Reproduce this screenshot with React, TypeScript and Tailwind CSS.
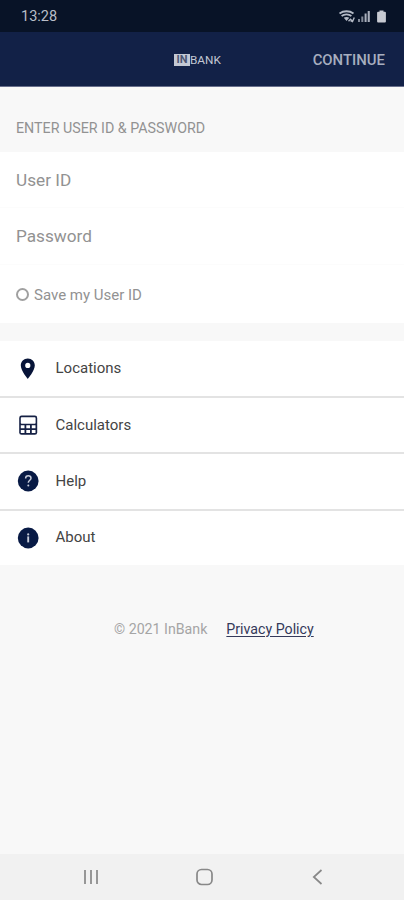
import type { ReactNode } from "react";

interface MenuItem {
  label: string;
  icon: ReactNode;
}

const MENU_ITEMS: MenuItem[] = [
  {
    label: "Locations",
    icon: (
      <svg className="w-6 h-6" viewBox="0 0 24 24" fill="#071438">
        <path
          fillRule="evenodd"
          d="M11.8 1.5C7.8 1.5 4.8 4.5 4.8 8.500c0 5.200 7 13.400 7 13.400s7-8.200 7-13.400c0-4-3-7-7-7zm0 4.300a2.600 2.600 0 100 5.200 2.600 2.600 0 000-5.200z"
        />
      </svg>
    ),
  },
  {
    label: "Calculators",
    icon: (
      <svg className="w-6 h-6" viewBox="0 0 24 24">
        <rect x="3.2" y="2.6" width="18" height="19.2" rx="2.4" fill="#152044" />
        <rect x="4.8" y="4.3" width="14.8" height="6.4" rx="0.8" fill="white" />
        <path
          fill="white"
          d="M4.8 12.3h3.7v2.9H4.8zM10.3 12.3H14v2.9h-3.7zM15.8 12.3h3.7v2.9h-3.7zM4.8 17h3.7v2.9H4.8zM10.3 17H14v2.9h-3.7zM15.8 17h3.7v2.9h-3.7z"
        />
      </svg>
    ),
  },
  {
    label: "Help",
    icon: (
      <svg className="w-6 h-6" viewBox="0 0 24 24">
        <circle cx="12.2" cy="12" r="10.4" fill="#081a45" />
        <path
          d="M9.6 9.5c0-1.7 1.1-2.7 2.7-2.7s2.7 1 2.7 2.4c0 2-2.7 2.1-2.7 4.5"
          fill="none"
          stroke="#c5cad8"
          strokeWidth="1.5"
        />
        <circle cx="12.3" cy="16.4" r="1" fill="#c5cad8" />
      </svg>
    ),
  },
  {
    label: "About",
    icon: (
      <svg className="w-6 h-6" viewBox="0 0 24 24">
        <circle cx="12.2" cy="12" r="10.4" fill="#081a45" />
        <circle cx="12.2" cy="8.4" r="1.1" fill="#c5cad8" />
        <path d="M12.2 10.4v6" stroke="#c5cad8" strokeWidth="1.9" />
      </svg>
    ),
  },
];

function StatusBar() {
  return (
    <div className="h-8 shrink-0 bg-[#081327] pl-[21px] pr-[18px] pt-px flex items-center justify-between">
      <span className="text-[14.5px] leading-[31px] text-[#b9bec8]">13:28</span>
      <div className="flex items-center">
        <svg className="w-[17px] h-[14px]" viewBox="0 0 17 14" fill="none" stroke="#b4bac6">
          <path d="M0.5 3.5c4-3 10-3 14 0" strokeWidth="1.8" />
          <path d="M2.6 6c2.7-2.3 7.1-2.3 9.8 0" strokeWidth="1.7" />
          <path d="M4.8 7.8c1.5-1.2 4-1.2 5.5 0L7.5 11z" fill="#b4bac6" stroke="none" />
          <path d="M9.5 11.3l2-2 2 2M11.5 10.5l2 1 1.8-4" strokeWidth="1.4" />
        </svg>
        <svg className="w-[13px] h-[13px] ml-[2px]" viewBox="0 0 13 13" fill="#aab0bd">
          <path d="M0 9h2v3H0zM3.3 6.5h2V12h-2z" opacity="0.75" />
          <path d="M6.6 3.5h2V12h-2zM9.7 1h2.1v11H9.7z" />
        </svg>
        <svg className="w-[9px] h-[13px] ml-[6px]" viewBox="0 0 9 13" fill="#c7cad2">
          <path d="M2.5 0.5h4v1.300h1.400a1 1 0 011 1v8.700a1 1 0 01-1 1H1.100a1 1 0 01-1-1V2.800a1 1 0 011-1h1.400z" />
        </svg>
      </div>
    </div>
  );
}

function Header() {
  return (
    <header className="h-[55px] shrink-0 bg-[#122147] border-b border-[#686f8c] grid grid-cols-[174px_1fr_auto] items-center pr-[19px] pt-px">
      <span />
      <div className="flex items-center">
        <span className="w-[16px] h-[12px] bg-[#c3c8d4] text-[#4a5472] text-[11px] leading-[12px] font-bold text-center">
          IN
        </span>
        <span className="text-[11.8px] leading-[12px] text-[#c3c8d4]">BANK</span>
      </div>
      <button className="pt-px text-[14.9px] leading-5 font-medium text-[#a7aebf]">CONTINUE</button>
    </header>
  );
}

export default function App() {
  return (
    <div className="w-full h-[900px] flex flex-col bg-[#f8f8f8] font-[Roboto,sans-serif] overflow-hidden">
      <StatusBar />
      <Header />

      {/* Login form */}
      <h2 className="h-[65px] shrink-0 px-4 pt-[31px] text-[14.25px] leading-5 text-[#929292]">
        ENTER USER ID &amp; PASSWORD
      </h2>
      <form className="h-[171px] shrink-0 bg-white text-[#929292]">
        <div className="h-14 px-4 pt-[3px] flex items-center border-b border-[#fcfcfc]">
          <input
            className="w-full text-[17.2px] outline-none placeholder:text-[#929292]"
            placeholder="User ID"
          />
        </div>
        <div className="h-[57px] px-4 pt-[2px] flex items-center border-b border-[#fcfcfc]">
          <input
            className="w-full text-[17.2px] outline-none placeholder:text-[#929292]"
            placeholder="Password"
          />
        </div>
        <label className="h-[58px] px-4 pt-[3px] flex items-center gap-[5px] text-[15px]">
          <span className="w-[13px] h-[13px] mb-[3px] rounded-full border-2 border-[#a0a0a0]" />
          Save my User ID
        </label>
      </form>

      {/* Menu */}
      <nav className="mt-[18px] shrink-0 bg-white">
        {MENU_ITEMS.map((item) => (
          <a
            key={item.label}
            className="h-[56.33px] first:h-[57px] last:h-[54px] pl-4 flex items-center gap-[15.5px] border-b-2 last:border-b-0 border-[#e3e3e3] text-[15px] text-[#444444]"
          >
            {item.icon}
            {item.label}
          </a>
        ))}
      </nav>

      <footer className="mt-[54px] pl-[114px] flex gap-[19px] text-[14.2px] leading-5 text-[#a5a5a5]">
        <span>© 2021 InBank</span>
        <a className="text-[#34395a] underline underline-offset-2">Privacy Policy</a>
      </footer>

      {/* System navigation */}
      <div className="mt-auto h-[46px] shrink-0 bg-[#f1f1f1] pl-[82px] pr-[77px] flex items-center justify-between text-[#888888]">
        <svg className="w-[18px] h-[18px]" viewBox="0 0 18 18" stroke="currentColor" strokeWidth="1.7">
          <path d="M3 2v14M9 2v14M15 2v14" />
        </svg>
        <svg className="w-[18px] h-[18px]" viewBox="0 0 18 18" fill="none" stroke="currentColor" strokeWidth="1.7">
          <rect x="1" y="1.5" width="15" height="15" rx="4.5" />
        </svg>
        <svg className="w-[18px] h-[18px]" viewBox="0 0 18 18" fill="none" stroke="currentColor" strokeWidth="1.7">
          <path d="M12.5 2L4.8 9l7.7 7" />
        </svg>
      </div>
    </div>
  );
}
